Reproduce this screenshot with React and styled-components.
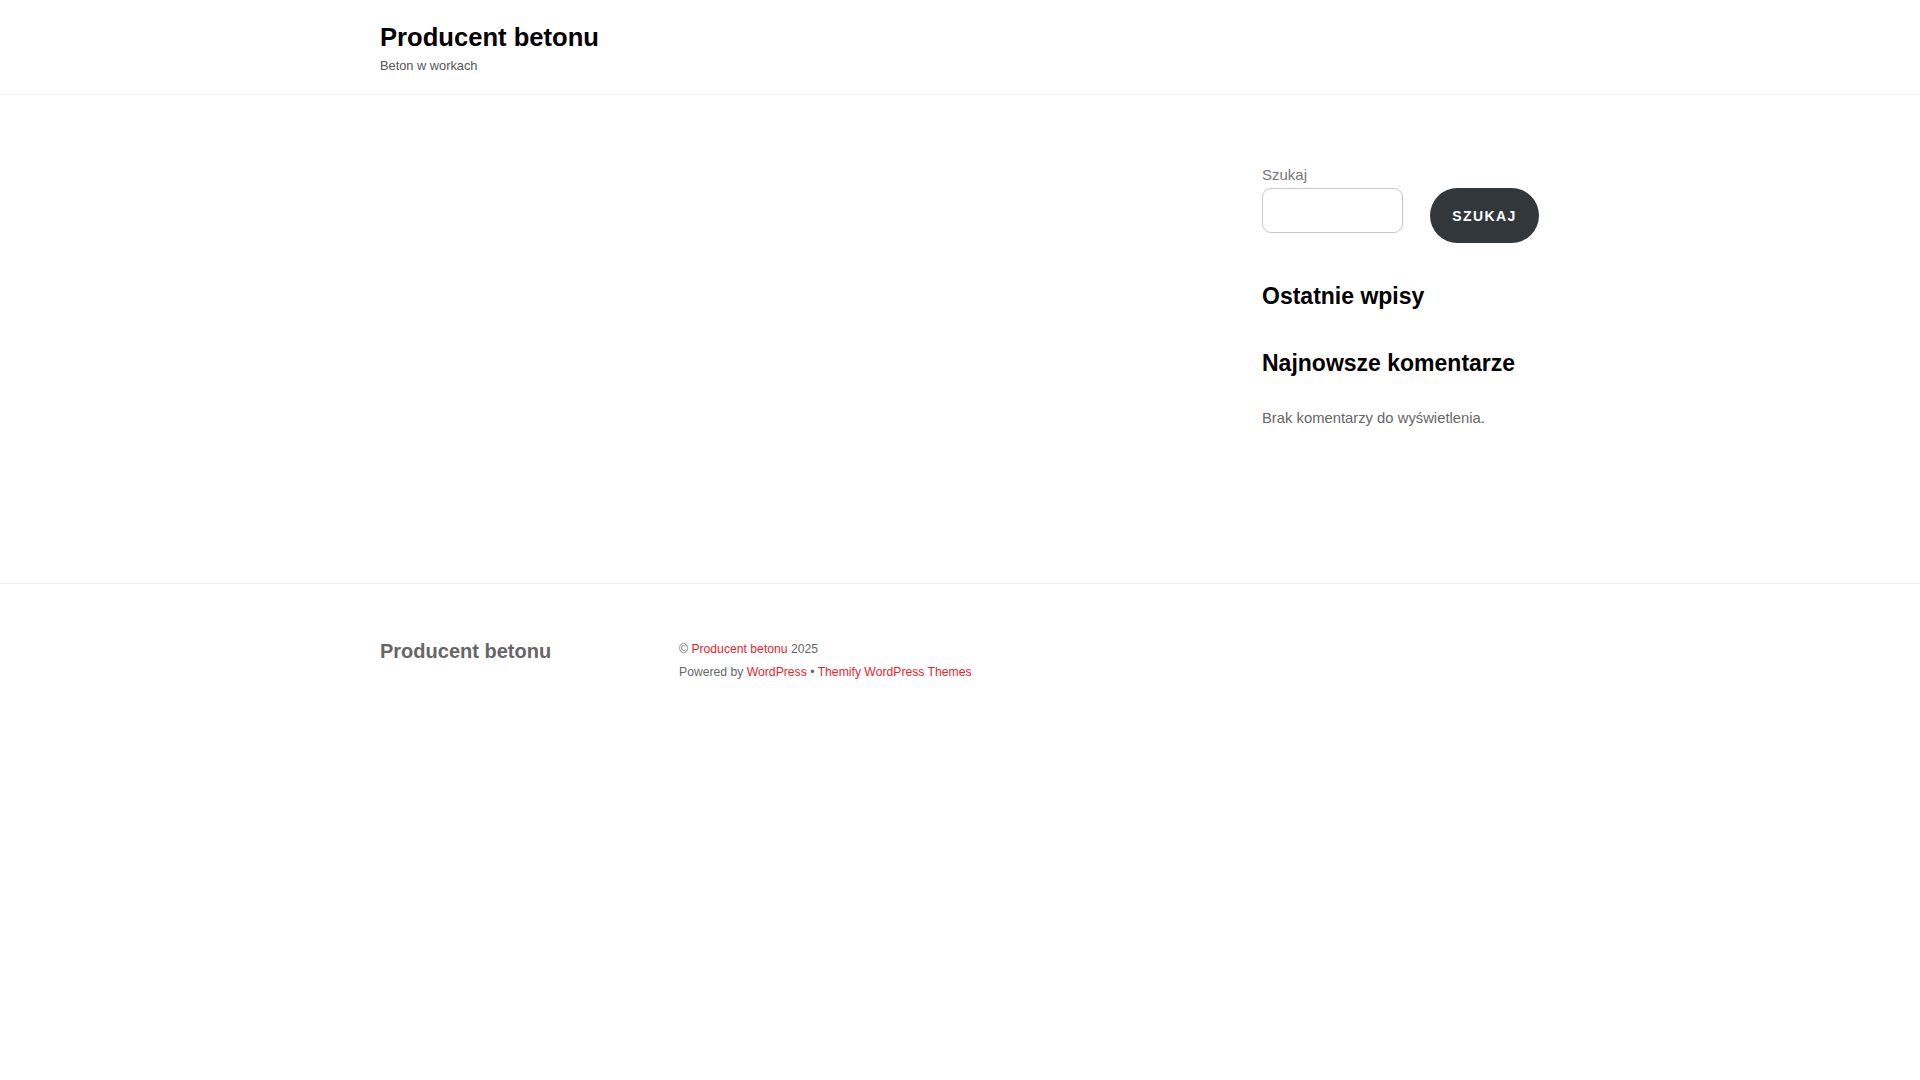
import React from "react";
import styled, { createGlobalStyle } from "styled-components";

const GlobalStyle = createGlobalStyle`
  * { box-sizing: border-box; }
  html, body {
    margin: 0;
    padding: 0;
    background: #fff;
    font-family: "Liberation Sans", Arial, sans-serif;
    color: #666;
  }
  a { text-decoration: none; }
`;

const Wrap = styled.div`
  width: 1160px;
  margin: 0 auto;
`;

const Header = styled.header`
  border-bottom: 1px solid #efefef;
  padding: 22px 0 19px;
`;

const SiteTitle = styled.h1`
  margin: 0;
  font-size: 25.6px;
  line-height: 31px;
  font-weight: 700;
  color: #000;
`;

const Tagline = styled.p`
  margin: 3px 0 0;
  font-size: 12.8px;
  line-height: 19px;
  color: #555;
`;

const Main = styled(Wrap)`
  display: flex;
  justify-content: space-between;
  padding: 69px 0 154px;
`;

const Content = styled.div`
  width: 70%;
`;

const Sidebar = styled.aside`
  width: 278px;
`;

const Widget = styled.section`
  margin-bottom: ${(p) => p.$gap ?? 37}px;
`;

const Label = styled.label`
  display: block;
  font-size: 15px;
  line-height: 22px;
  color: #777;
  margin-bottom: 2px;
`;

const SearchRow = styled.form`
  display: flex;
  align-items: flex-start;
  gap: 27px;
`;

const SearchInput = styled.input`
  width: 141px;
  height: 45px;
  border: 1px solid #c8c8c8;
  border-radius: 9px;
  padding: 0 12px;
  font-size: 15px;
  background: #fff;
  outline: none;
`;

const SearchButton = styled.button`
  width: 109px;
  height: 55px;
  border: 0;
  border-radius: 9999px;
  background: #32373c;
  color: #fff;
  font-family: "Liberation Sans", Arial, sans-serif;
  font-size: 14px;
  font-weight: 700;
  letter-spacing: 1.4px;
  text-transform: uppercase;
  cursor: pointer;
  padding: 0;
`;

const WidgetTitle = styled.h2`
  margin: 0 0 ${(p) => p.$mb ?? 0}px;
  font-size: 23px;
  line-height: 30px;
  font-weight: 700;
  color: #000;
`;

const Note = styled.p`
  margin: 0;
  font-size: 14.8px;
  line-height: 22px;
  color: #666;
`;

const Footer = styled.footer`
  border-top: 1px solid #efefef;
  padding: 54px 0 60px;
`;

const FooterGrid = styled(Wrap)`
  display: grid;
  grid-template-columns: 299px 1fr;
  align-items: start;
`;

const FooterTitle = styled.div`
  margin-top: 0;
  font-size: 20px;
  line-height: 26px;
  font-weight: 700;
  color: #666;
`;

const Credits = styled.div`
  font-size: 12.2px;
  line-height: 23.4px;
  color: #666;
`;

const Link = styled.a`
  color: #ee2230;
`;

export default function App() {
  return (
    <>
      <GlobalStyle />
      <Header>
        <Wrap>
          <SiteTitle>Producent betonu</SiteTitle>
          <Tagline>Beton w workach</Tagline>
        </Wrap>
      </Header>

      <Main>
        <Content />
        <Sidebar>
          <Widget $gap={38}>
            <Label htmlFor="s">Szukaj</Label>
            <SearchRow onSubmit={(e) => e.preventDefault()}>
              <SearchInput id="s" type="search" />
              <SearchButton type="submit">Szukaj</SearchButton>
            </SearchRow>
          </Widget>
          <Widget>
            <WidgetTitle>Ostatnie wpisy</WidgetTitle>
          </Widget>
          <Widget $gap={0}>
            <WidgetTitle $mb={28.6}>Najnowsze komentarze</WidgetTitle>
            <Note>Brak komentarzy do wyświetlenia.</Note>
          </Widget>
        </Sidebar>
      </Main>

      <Footer>
        <FooterGrid>
          <FooterTitle>Producent betonu</FooterTitle>
          <Credits>
            <div>
              © <Link href="#">Producent betonu</Link> 2025
            </div>
            <div>
              Powered by <Link href="#">WordPress</Link> •{" "}
              <Link href="#">Themify WordPress Themes</Link>
            </div>
          </Credits>
        </FooterGrid>
      </Footer>
    </>
  );
}
